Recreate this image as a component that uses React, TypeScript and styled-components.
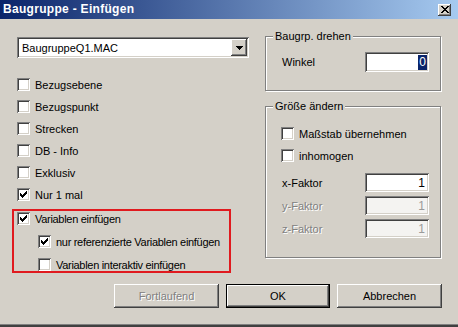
import styled, { createGlobalStyle, css } from 'styled-components';

const GlobalStyle = createGlobalStyle`
	html, body {
		margin: 0;
		padding: 0;
		background: #d4d0c8;
	}
	body {
		font-family: 'Liberation Sans', Arial, sans-serif;
		font-size: 11px;
		color: #000;
	}
`;

const sunken = css`
	box-shadow: inset 1px 1px 0 #808080, inset -1px -1px 0 #ffffff, inset 2px 2px 0 #404040,
		inset -2px -2px 0 #d4d0c8;
`;

const raised = css`
	box-shadow: inset -1px -1px 0 #404040, inset 1px 1px 0 #ffffff, inset -2px -2px 0 #808080,
		inset 2px 2px 0 #d4d0c8;
`;

const disabledText = css`
	color: #808080;
	text-shadow: 1px 1px 0 #ffffff;
`;

const Window = styled.div`
	width: 458px;
	height: 327px;
	box-sizing: border-box;
	display: flex;
	flex-direction: column;
	background: #d4d0c8;
	border-bottom: 2px solid #404040;
	box-shadow: inset 0 -1px 0 #808080;
`;

const TitleBar = styled.div`
	height: 19px;
	flex: none;
	display: flex;
	align-items: center;
	justify-content: space-between;
	padding: 0 7px 0 3px;
	background: linear-gradient(to right, #0a246a, #a6caf0);
`;

const TitleText = styled.span`
	color: #fff;
	font-weight: bold;
	font-size: 12px;
	line-height: 19px;
	letter-spacing: 0.3px;
`;

const CloseButton = styled.div`
	width: 13px;
	height: 12px;
	background: #d4d0c8;
	display: flex;
	align-items: center;
	justify-content: center;
	${raised};
`;

const Main = styled.div`
	display: flex;
	gap: 16px;
	padding: 18px 0 0 17px;
`;

const LeftColumn = styled.div`
	width: 232px;
	display: flex;
	flex-direction: column;
`;

const RightColumn = styled.div`
	width: 176px;
	margin-top: -1px;
	display: flex;
	flex-direction: column;
	gap: 15px;
`;

const Combo = styled.div`
	height: 21px;
	box-sizing: border-box;
	background: #fff;
	display: flex;
	align-items: center;
	padding: 2px 2px 2px 5px;
	${sunken};
`;

const ComboText = styled.span`
	flex: 1;
	font-size: 11px;
`;

const ComboArrow = styled.div`
	width: 16px;
	height: 17px;
	background: #d4d0c8;
	display: flex;
	align-items: center;
	justify-content: center;
	${raised};
`;

const CheckList = styled.div<{ $gap?: number; $top?: number; $left?: number }>`
	display: flex;
	flex-direction: column;
	gap: ${(p) => p.$gap ?? 9}px;
	margin-top: ${(p) => p.$top ?? 0}px;
	margin-left: ${(p) => p.$left ?? 0}px;
`;

const CheckRow = styled.label<{ $indent?: number }>`
	height: 13px;
	display: flex;
	align-items: center;
	gap: 5px;
	padding-left: ${(p) => p.$indent ?? 0}px;
	font-size: 11px;
	white-space: nowrap;
`;

const Box = styled.span`
	width: 13px;
	height: 13px;
	flex: none;
	background: #fff;
	display: flex;
	align-items: center;
	justify-content: center;
	${sunken};
`;

const Highlight = styled.div`
	margin: 8px 0 0 -5px;
	width: 219px;
	box-sizing: border-box;
	border: 2px solid #e01a1f;
	padding: 1px 0 0 3px;
	letter-spacing: -0.3px;
`;

const Group = styled.div<{ $pad: string }>`
	position: relative;
	box-sizing: border-box;
	width: 176px;
	border: 1px solid #808080;
	box-shadow: inset 1px 1px 0 #fff, 1px 1px 0 #fff;
	padding: ${(p) => p.$pad};
	display: flex;
	flex-direction: column;
`;

const GroupTitle = styled.span`
	position: absolute;
	top: -7px;
	left: 7px;
	padding: 0 2px;
	line-height: 13px;
	font-size: 11px;
	background: #d4d0c8;
`;

const FieldRow = styled.div<{ $height: number; $disabled?: boolean }>`
	height: ${(p) => p.$height}px;
	display: flex;
	align-items: center;
	justify-content: space-between;
	font-size: 11px;
	${(p) => p.$disabled && disabledText};
`;

const Field = styled.div<{ $disabled?: boolean }>`
	width: 64px;
	height: 100%;
	box-sizing: border-box;
	background: ${(p) => (p.$disabled ? '#f4f3f1' : '#fff')};
	display: flex;
	align-items: center;
	justify-content: flex-end;
	padding: 2px 4px 2px 2px;
	font-size: 12px;
	color: ${(p) => (p.$disabled ? '#9a9a9a' : '#000')};
	text-shadow: none;
	${sunken};
`;

const Selected = styled.span`
	background: #0a246a;
	color: #fff;
	line-height: 15px;
	padding: 0 1px;
	margin-right: -2px;
`;

const FieldStack = styled.div`
	margin-top: 11px;
	display: flex;
	flex-direction: column;
	gap: 4px;
`;

const ButtonRow = styled.div`
	display: flex;
	justify-content: flex-end;
	gap: 7px;
	padding-right: 16px;
	margin-top: 11px;
`;

const Button = styled.div<{ $default?: boolean; $disabled?: boolean }>`
	width: 105px;
	height: 24px;
	box-sizing: border-box;
	display: flex;
	align-items: center;
	justify-content: center;
	font-size: 11px;
	background: #d4d0c8;
	${raised};
	${(p) =>
		p.$default &&
		css`
			border: 1px solid #000;
			width: 104px;
		`};
	${(p) => p.$disabled && disabledText};
`;

function Check() {
	return (
		<svg width="7" height="7" viewBox="0 0 7 7" shapeRendering="crispEdges">
			<path
				fill="#000"
				d="M6 0h1v3h-1v1h-1v1h-1v1h-1v1h-1v-1h-1v-1h-1v-3h1v1h1v1h1v-1h1v-1h1z"
			/>
		</svg>
	);
}

function CheckBox({ label, checked, indent }: { label: string; checked?: boolean; indent?: number }) {
	return (
		<CheckRow $indent={indent}>
			<Box>{checked && <Check />}</Box>
			<span>{label}</span>
		</CheckRow>
	);
}

const leftOptions = [
	{ label: 'Bezugsebene', checked: false },
	{ label: 'Bezugspunkt', checked: false },
	{ label: 'Strecken', checked: false },
	{ label: 'DB - Info', checked: false },
	{ label: 'Exklusiv', checked: false },
	{ label: 'Nur 1 mal', checked: true },
];

const factors = [
	{ label: 'x-Faktor', value: '1', disabled: false },
	{ label: 'y-Faktor', value: '1', disabled: true },
	{ label: 'z-Faktor', value: '1', disabled: true },
];

export default function App() {
	return (
		<>
			<GlobalStyle />
			<Window>
				<TitleBar>
					<TitleText>Baugruppe - Einfügen</TitleText>
					<CloseButton>
						<svg width="8" height="7" viewBox="0 0 8 7" shapeRendering="crispEdges">
							<path
								fill="#000"
								d="M0 0h2v1h1v1h2v-1h1v-1h2v1h-1v1h-1v1h-1v1h1v1h1v1h1v1h-2v-1h-1v-1h-2v1h-1v1h-2v-1h1v-1h1v-1h1v-1h-1v-1h-1v-1h-1z"
							/>
						</svg>
					</CloseButton>
				</TitleBar>

				<Main>
					<LeftColumn>
						<Combo>
							<ComboText>BaugruppeQ1.MAC</ComboText>
							<ComboArrow>
								<svg width="7" height="4" viewBox="0 0 7 4" shapeRendering="crispEdges">
									<path fill="#000" d="M0 0h7v1h-1v1h-1v1h-1v1h-1v-1h-1v-1h-1v-1h-1z" />
								</svg>
							</ComboArrow>
						</Combo>

						<CheckList $top={20}>
							{leftOptions.map((o) => (
								<CheckBox key={o.label} label={o.label} checked={o.checked} />
							))}
						</CheckList>

						<Highlight>
							<CheckList $gap={10}>
								<CheckBox label="Variablen einfügen" checked />
								<CheckBox label="nur referenzierte Variablen einfügen" checked indent={21} />
								<CheckBox label="Variablen interaktiv einfügen" indent={21} />
							</CheckList>
						</Highlight>
					</LeftColumn>

					<RightColumn>
						<Group $pad="15px 11px 18px 16px">
							<GroupTitle>Baugrp. drehen</GroupTitle>
							<FieldRow $height={20}>
								<span>Winkel</span>
								<Field>
									<Selected>0</Selected>
								</Field>
							</FieldRow>
						</Group>

						<Group $pad="20px 11px 19px 16px">
							<GroupTitle>Größe ändern</GroupTitle>
							<CheckList $left={-1}>
								<CheckBox label="Maßstab übernehmen" />
								<CheckBox label="inhomogen" />
							</CheckList>
							<FieldStack>
								{factors.map((f) => (
									<FieldRow key={f.label} $height={19} $disabled={f.disabled}>
										<span>{f.label}</span>
										<Field $disabled={f.disabled}>{f.value}</Field>
									</FieldRow>
								))}
							</FieldStack>
						</Group>
					</RightColumn>
				</Main>

				<ButtonRow>
					<Button $disabled>Fortlaufend</Button>
					<Button $default>OK</Button>
					<Button>Abbrechen</Button>
				</ButtonRow>
			</Window>
		</>
	);
}
